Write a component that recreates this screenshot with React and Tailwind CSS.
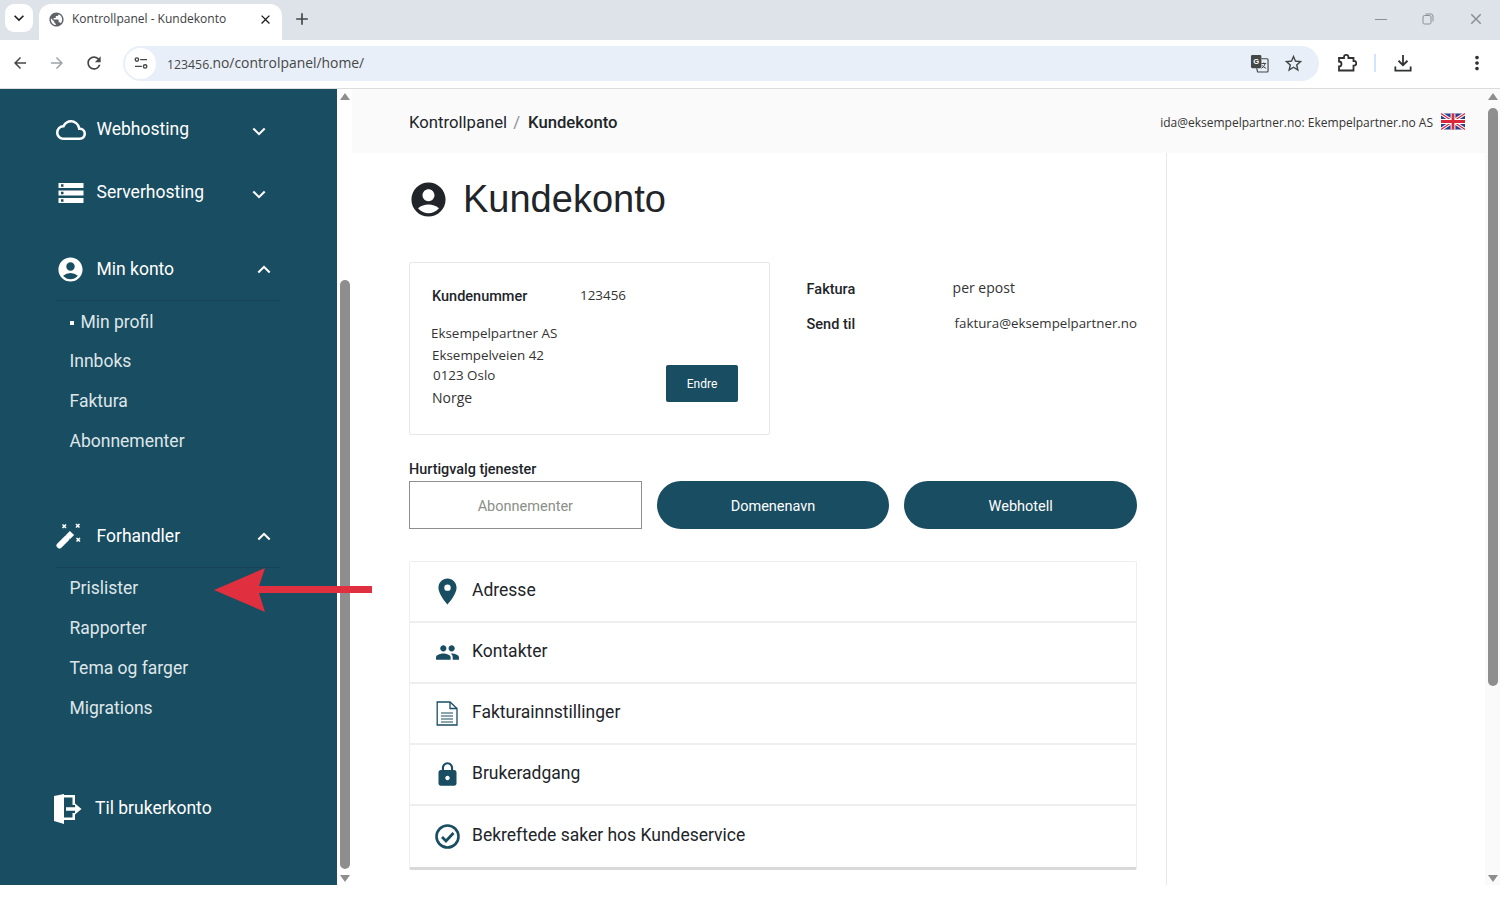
import React from "react";
import { MdAccountCircle, MdLocationOn, MdPeople, MdLock, MdStorage, MdPublic, MdStarBorder, MdOutlineCloud, MdRefresh, MdArrowBack, MdArrowForward, MdClose, MdAdd, MdMoreVert, MdKeyboardArrowDown } from "react-icons/md";

const Chevron = ({ up }) => (
  <svg viewBox="0 0 16 10" className="w-[14px] h-[9px]" fill="none" stroke="white" strokeWidth="2.4">
    <polyline points={up ? "1.5,8.5 8,2 14.5,8.5" : "1.5,1.5 8,8 14.5,1.5"} />
  </svg>
);

const Door = () => (
  <svg viewBox="0 0 28 30" className="w-[28px] h-[30px]" fill="white">
    <path d="M0 2 L10 0 V30 L0 27 Z" />
    <path d="M10 1 H21 V11 H18.5 V3.5 H10 Z M18.5 19 H21 V26 H10 V23.5 H18.5 Z" />
    <path d="M12 13.3 H21 V9.5 L27.5 15 L21 20.5 V16.7 H12 Z" />
  </svg>
);

const Wand = () => (
  <svg viewBox="0 0 26 26" className="w-[26px] h-[26px]" fill="none" stroke="white">
    <path d="M3.5 22.5 L10.5 15.5" strokeWidth="6" strokeLinecap="round" />
    <path d="M12 14 L16 10" strokeWidth="6" />
    <path d="M6.5 1.5 L10 5 M10 1.5 L6.5 5 M20 1 L23.5 4.5 M23.5 1 L20 4.5 M20.5 15 L24 18.5 M24 15 L20.5 18.5" strokeWidth="1.6" />
  </svg>
);

const DocIcon = () => (
  <svg viewBox="0 0 22 25" className="w-[22px] h-[25px]" fill="none" stroke="#194d61" strokeWidth="1.3">
    <path d="M1.2 1 H14 L21 7.5 V24 H1.2 Z" />
    <path d="M14 1 V7.5 H21" />
    <path d="M5 12 H17 M5 15 H17 M5 18 H17 M5 21 H17" strokeWidth="1.1" />
  </svg>
);

const CheckRing = () => (
  <svg viewBox="0 0 25 25" className="w-[25px] h-[25px]" fill="none" stroke="#194d61">
    <circle cx="12.5" cy="12.5" r="11" strokeWidth="2.6" />
    <path d="M7 13 L11 17 L18.5 9" strokeWidth="2.8" />
  </svg>
);

const Flag = () => (
  <svg viewBox="0 0 60 40" className="w-[24px] h-[17px]">
    <rect width="60" height="40" fill="#2b3f8c" />
    <path d="M0 0 L60 40 M60 0 L0 40" stroke="white" strokeWidth="8" />
    <path d="M0 0 L60 40 M60 0 L0 40" stroke="#d8283a" strokeWidth="3" />
    <path d="M30 0 V40 M0 20 H60" stroke="white" strokeWidth="12" />
    <path d="M30 0 V40 M0 20 H60" stroke="#d8283a" strokeWidth="7" />
  </svg>
);

const Scrollbar = ({ spacer, thumb, side }) => (
  <div className={"w-[15px] shrink-0 h-[796px] flex flex-col items-center relative " + side}>
    <div className="w-0 h-0 mt-[4px] border-l-[5px] border-r-[5px] border-b-[7px] border-l-transparent border-r-transparent border-b-[#8e8e8e]" />
    <div className="shrink-0" style={{ height: spacer }} />
    <div className="w-[10px] rounded-full bg-[#8e8e8e] shrink-0" style={{ height: thumb }} />
    <div className="flex-1" />
    <div className="w-0 h-0 mb-[3px] border-l-[5px] border-r-[5px] border-t-[7px] border-l-transparent border-r-transparent border-t-[#8e8e8e]" />
  </div>
);

const NavHead = ({ icon, label, open, line, cls = "" }) => (
  <div className={"h-[63px] flex items-center pl-[56px] text-[17.5px] text-white " + (line ? "relative " : "") + cls}>
    <div className="w-[40.5px] flex items-center">{icon}</div>
    <span>{label}</span>
    <div className={open ? "ml-auto mr-[66px]" : "ml-auto mr-[71px] mt-[4px]"}><Chevron up={open} /></div>
    {line && <div className="absolute left-[56px] right-[56px] bottom-0 h-px bg-[#15445a]" />}
  </div>
);

const SubItem = ({ children, dot }) => (
  <div className="h-[39.7px] flex items-center pl-[69.5px] text-[17.5px] text-[#dfe6e9]">
    {dot && <span className="w-[4px] h-[4px] bg-white mr-[7px] mt-[2px]" />}
    <span>{children}</span>
  </div>
);

const Row = ({ icon, children, last }) => (
  <div className={"h-[61.1px] flex items-center text-[17.5px] text-[#212529] " + (last ? "" : "border-b-2 border-[#eeeeee]")}>
    <div className="w-[62px] flex justify-center shrink-0 pl-[12px]">{icon}</div>
    <span className="-mt-[3px]">{children}</span>
  </div>
);

export default function App() {
  return (
    <div className="w-[1500px] h-[900px] overflow-hidden bg-white [font-family:Roboto,sans-serif]">
      {/* tab strip */}
      <div className="h-[40px] bg-[#dee3ea] flex items-end relative pl-[5px]">
        <div className="self-start mt-[4px] w-[28px] h-[28px] bg-white rounded-[9px] flex items-center justify-center text-[#1f1f1f]">
          <MdKeyboardArrowDown size={20} />
        </div>
        <div className="ml-[6px] w-[243px] h-[36px] bg-white rounded-t-[12px] flex items-center pl-[9px] pb-[5px] [font-family:'Open_Sans',sans-serif] text-[12px] text-[#3c4043]">
          <MdPublic size={17} className="text-[#5f6368]" />
          <span className="ml-[7px] -mt-px">Kontrollpanel - Kundekonto</span>
          <MdClose size={15} className="ml-auto mr-[9px] text-[#1f1f1f]" />
        </div>
        <MdAdd size={20} className="ml-[10px] mb-[11px] text-[#444746]" />
        <div className="ml-auto flex items-center self-start mt-[10px] text-[#8a8f96]">
          <div className="w-[12px] h-px bg-[#8a8f96] mr-[35px]" />
          <svg viewBox="0 0 12 12" className="w-[12px] h-[12px] mr-[33px]" fill="none" stroke="#8a8f96" strokeWidth="1"><rect x="1" y="2.5" width="8" height="8.5" rx="1.5" /><path d="M3.5 1 H9 Q11 1 11 3 V8.5" /></svg>
          <MdClose size={18} className="mr-[15px]" />
        </div>
      </div>
      {/* toolbar */}
      <div className="h-[49px] pb-[2px] bg-white border-b border-[#dcdcdc] flex items-center rounded-t-[8px] relative">
        <div className="w-[123px] flex items-center pl-[11px] text-[#444746]">
          <MdArrowBack size={18} />
          <MdArrowForward size={18} className="ml-[19px] text-[#a0a4a8]" />
          <MdRefresh size={20} className="ml-[18px]" />
        </div>
        <div className="w-[1196px] h-[35px] bg-[#e9eff8] rounded-full flex items-center pl-[2px] pr-[15px]">
          <div className="w-[31px] h-[31px] bg-white rounded-full flex items-center justify-center">
            <svg viewBox="0 0 16 14" className="w-[14px] h-[12px]" fill="none" stroke="#444746" strokeWidth="1.6"><path d="M7 3 H15 M1 11 H9" /><circle cx="3.2" cy="3" r="2" /><circle cx="12.8" cy="11" r="2" /></svg>
          </div>
          <span className="ml-[11px] mt-[5px] text-[12.3px] [font-family:'Open_Sans',sans-serif] text-[#444746]">123456.</span>
          <span className="mt-[1px] text-[13.9px] [font-family:'Open_Sans',sans-serif] text-[#444746]">no/controlpanel/home/</span>
          <div className="ml-auto flex items-center">
            <svg viewBox="0 0 20 20" className="w-[19px] h-[19px] mr-[14px]">
              <rect x="1" y="1" width="11" height="14" rx="1.5" fill="#444746" />
              <path d="M12 5 H18 Q19 5 19 6 V18 Q19 19 18 19 H8 L7 15" fill="none" stroke="#444746" strokeWidth="1.2" />
              <text x="3.4" y="11" fontSize="8" fontWeight="700" fill="white" fontFamily="Liberation Sans, sans-serif">G</text>
              <path d="M12 10 H17 M14.5 9 V10 M16 10 Q15 14 12 15 M13 12 Q14.5 14.5 17 15" fill="none" stroke="#444746" strokeWidth="1" />
            </svg>
            <MdStarBorder size={21} className="text-[#444746]" />
          </div>
        </div>
        <svg viewBox="0 0 20 20" className="ml-[18px] w-[20px] h-[20px]" fill="none" stroke="#2f3133" strokeWidth="1.8">
          <path d="M2 5 H7 V4 A2.2 2.2 0 0 1 11.4 4 V5 H16.5 V8 H17 A2.2 2.2 0 0 1 17 12.6 H16.5 V17.5 H2 V13.5 A2.5 2.5 0 0 0 2 8.5 Z" />
        </svg>
        <div className="ml-[17px] w-[2px] h-[18px] bg-[#d3e3fd]" />
        <svg viewBox="0 0 20 20" className="ml-[18px] w-[18px] h-[18px]" fill="none" stroke="#2f3133" strokeWidth="2">
          <path d="M10 1 V12 M5 7.5 L10 12.5 L15 7.5" />
          <path d="M1.5 14 V18.5 H18.5 V14" />
        </svg>
        <MdMoreVert size={22} className="ml-[54px] text-[#2f3133]" />
      </div>
      {/* body */}
      <div className="flex h-[796px] relative">
        <aside className="w-[337px] shrink-0 bg-[#194d61] pt-[9px]">
          <NavHead icon={<MdOutlineCloud size={30} className="text-white" />} label="Webhosting" />
          <NavHead icon={<MdStorage size={30} className="text-white" />} label="Serverhosting" />
          <NavHead icon={<MdAccountCircle size={29} className="text-white" />} label="Min konto" open line cls="mt-[14px]" />
          <div className="pt-[1px]">
            <SubItem dot>Min profil</SubItem>
            <SubItem>Innboks</SubItem>
            <SubItem>Faktura</SubItem>
            <SubItem>Abonnementer</SubItem>
          </div>
          <NavHead icon={<Wand />} label="Forhandler" open line cls="mt-[44px]" />
          <div className="pt-[1px]">
            <SubItem>Prislister</SubItem>
            <SubItem>Rapporter</SubItem>
            <SubItem>Tema og farger</SubItem>
            <SubItem>Migrations</SubItem>
          </div>
          <div className="mt-[61px] h-[40px] flex items-center pl-[54px] text-[17.5px] text-white">
            <div className="w-[41px]"><Door /></div>
            <span>Til brukerkonto</span>
          </div>
        </aside>
        <Scrollbar spacer={180} thumb={589} side="bg-white" />
        <main className="flex-1 min-w-0">
          <header className="h-[64px] bg-[#fafafa] flex items-center pl-[57px] pr-[20px] text-[16.7px] text-[#212529]">
            <span className="mt-[4px]">Kontrollpanel</span>
            <span className="mx-[6px] mt-[4px] text-[#8c9197]">/</span>
            <span className="ml-[2px] mt-[4px] font-medium">Kundekonto</span>
            <span className="ml-auto mt-[4px] text-[12px] [font-family:'Open_Sans',sans-serif] text-[#333]">ida@eksempelpartner.no: Ekempelpartner.no AS</span>
            <span className="ml-[8px] mt-[1px]"><Flag /></span>
          </header>
          <div className="w-[815px] h-[732px] border-r border-[#e8e8e8] pl-[57px] pr-[29px]">
            <div className="h-[93px] mb-[16px] flex items-center">
              <MdAccountCircle size={41} className="-ml-[1px] text-[#212529]" />
              <h1 className="ml-[14px] text-[38px] [font-family:'Liberation_Sans',sans-serif] text-[#212529]">Kundekonto</h1>
            </div>
            <div className="flex">
              <div className="w-[362px] h-[173px] border border-[#e8e8e8] rounded-[2px] relative pl-[22px] pt-[21px] [font-family:'Open_Sans',sans-serif] text-[13.4px] text-[#333]">
                <div className="flex items-center h-[24px]">
                  <span className="w-[148px] mt-[2px] text-[14.5px] font-medium [font-family:Roboto,sans-serif] text-[#212529]">Kundenummer</span>
                  <span className="-mt-px">123456</span>
                </div>
                <div className="mt-[15px] leading-[20px] -ml-[1px]">Eksempelpartner AS</div>
                <div className="mt-[2px] leading-[20px]">Eksempelveien 42</div>
                <div className="leading-[20px] ml-[1px]">0123 Oslo</div>
                <div className="mt-[2px] leading-[22px] text-[14px]">Norge</div>
                <button className="absolute left-[256px] top-[102px] w-[72px] h-[37px] bg-[#194d61] rounded-[2px] text-white text-[12px] [font-family:Roboto,sans-serif]">Endre</button>
              </div>
              <div className="pl-[36.5px] pt-[18px] [font-family:'Open_Sans',sans-serif] text-[14px] text-[#333]">
                <div className="flex items-center h-[20px]">
                  <span className="w-[146px] text-[14.5px] font-medium [font-family:Roboto,sans-serif] text-[#212529]">Faktura</span>
                  <span className="-mt-[6px]">per epost</span>
                </div>
                <div className="flex items-center h-[20px] mt-[15px]">
                  <span className="w-[148px] text-[14.5px] font-medium [font-family:Roboto,sans-serif] text-[#212529]">Send til</span>
                  <span className="text-[13.3px] -mt-[2px]">faktura@eksempelpartner.no</span>
                </div>
              </div>
            </div>
            <div className="mt-[25px] h-[20px] leading-[20px] text-[14.4px] font-medium text-[#212529]">Hurtigvalg tjenester</div>
            <div className="mt-[1px] w-[728px] grid grid-cols-3 gap-[15px] text-[14.5px]">
              <button className="h-[48px] pt-[3px] border border-[#8e8e8e] bg-white text-[#8b9088]">Abonnementer</button>
              <button className="h-[48px] pt-[3px] rounded-full bg-[#194d61] text-white">Domenenavn</button>
              <button className="h-[48px] pt-[3px] rounded-full bg-[#194d61] text-white">Webhotell</button>
            </div>
            <div className="mt-[32px] w-[728px] border border-[#eeeeee] border-b-[3px] border-b-[#d9d9d9] rounded-[2px]">
              <Row icon={<MdLocationOn size={31} className="text-[#194d61]" />}>Adresse</Row>
              <Row icon={<MdPeople size={25} className="text-[#194d61]" />}>Kontakter</Row>
              <Row icon={<DocIcon />}>Fakturainnstillinger</Row>
              <Row icon={<MdLock size={27} className="text-[#194d61]" />}>Brukeradgang</Row>
              <Row icon={<CheckRing />} last>Bekreftede saker hos Kundeservice</Row>
            </div>
          </div>
        </main>
        <Scrollbar spacer={8} thumb={578} side="bg-[#fafafa]" />
        {/* annotation arrow */}
        <svg viewBox="0 0 158 44" className="absolute left-[214px] top-[479px] w-[158px] h-[44px]">
          <path d="M0 22 L51 0 L45 18 H158 V25 H45 L51 44 Z" fill="#e03040" />
        </svg>
      </div>
    </div>
  );
}
